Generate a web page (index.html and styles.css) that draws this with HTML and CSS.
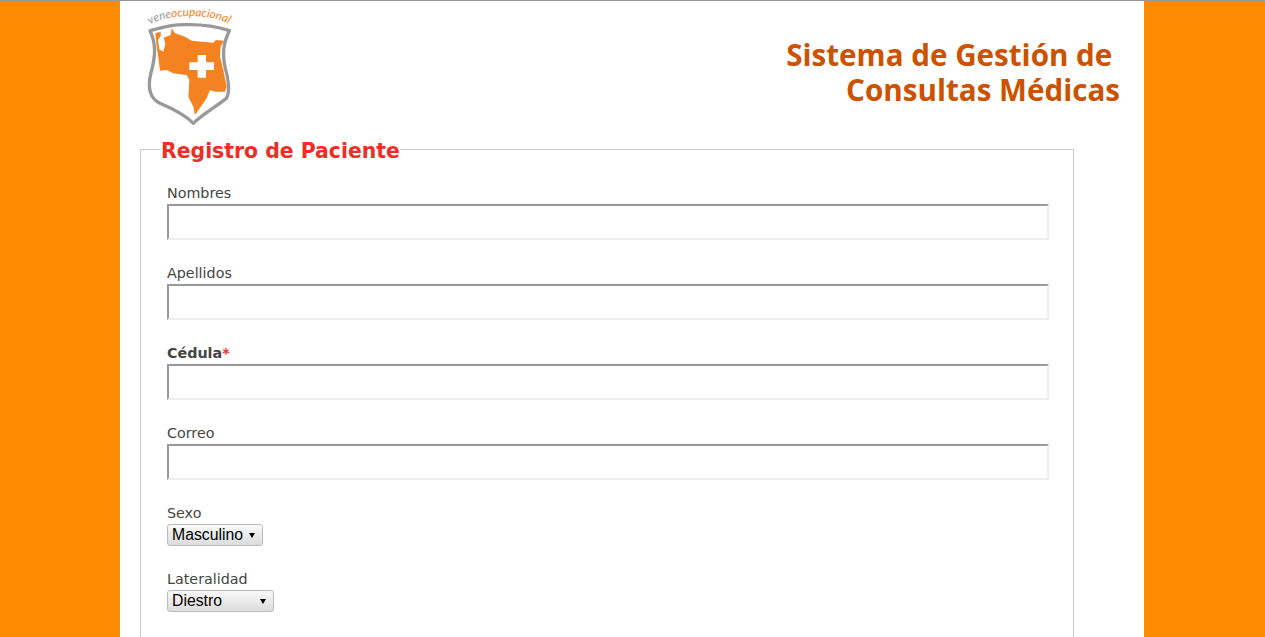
FILE: index.html
```html
<!doctype html>
<html lang="es">
 <head>
  <meta charset="utf-8">
  <title>Registro de Paciente</title>
  <link rel="stylesheet" href="styles.css">
 </head>
 <body>
 <div id="page">
   <header class="top">
     <svg class="logo" viewBox="0 3 390 390" width="130" height="130" role="img" aria-label="veneocupacional">
       <defs>
         <path id="logo-arc" d="M60 74 C105 42 250 36 312 80"/>
       </defs>
       <text class="logo-text" font-size="35"><textPath href="#logo-arc">vene<tspan class="logo-text-accent">ocupacional</tspan></textPath></text>
       <path class="logo-shield" d="M60 92 C110 78 130 73 178 74 C225 74 262 80 298 92 C280 130 276 160 286 205 C298 250 300 280 288 296 C258 320 215 345 190 370 C165 345 125 325 90 310 C60 295 52 265 62 222 C78 165 78 130 60 92 Z"/>
       <path class="logo-map" d="M76 100 L92 95 L92 108 L84 120 L88 148 L100 155 L106 132 L101 113 L122 105 L125 85 L135 100 L165 110 L185 122 L215 125 L250 128 L258 120 L282 122 L272 140 L270 170 L280 210 L290 260 L285 275 L255 275 L240 270 L230 295 L195 345 L190 320 L175 290 L178 240 L170 225 L130 220 L110 210 L90 212 L86 180 L80 140 Z"/>
       <path class="logo-cross" d="M203 165 H228 V187 H252 V210 H228 V233 H203 V210 H178 V187 H203 Z"/>
     </svg>
     <h1 class="site-title">Sistema de Gestión de&nbsp;<br>Consultas Médicas</h1>
   </header>

   <fieldset class="patient-form">
     <legend>Registro de Paciente</legend>
     <form class="fields">
       <div class="field">
         <label for="nombres">Nombres</label>
         <input type="text" id="nombres">
       </div>
       <div class="field">
         <label for="apellidos">Apellidos</label>
         <input type="text" id="apellidos">
       </div>
       <div class="field">
         <label for="cedula" class="required">Cédula<span class="mark">*</span></label>
         <input type="text" id="cedula">
       </div>
       <div class="field">
         <label for="correo">Correo</label>
         <input type="text" id="correo">
       </div>
       <div class="field">
         <label for="sexo">Sexo</label>
         <select id="sexo" class="select-sexo">
           <option>Masculino</option>
           <option>Femenino</option>
         </select>
       </div>
       <div class="field">
         <label for="lateralidad">Lateralidad</label>
         <select id="lateralidad" class="select-lateralidad">
           <option>Diestro</option>
           <option>Zurdo</option>
         </select>
       </div>
     </form>
   </fieldset>
 </div>
 </body>
</html>
```

FILE: styles.css
```css
html, body {
    margin: 0;
    height: 100%;
    overflow: hidden;
}

body {
    background-color: #ff8c00;
    border-top: 1px solid #999999;
    box-sizing: border-box;
}

#page {
    width: 1024px;
    height: 100%;
    margin-left: 120px;
    background-color: #ffffff;
    overflow: hidden;
}

.top {
    display: flex;
    justify-content: space-between;
    height: 134px;
    padding-left: 10px;
    padding-right: 24px;
}

.logo {
    display: block;
}

.logo-text {
    font-family: "Lato", sans-serif;
    font-style: italic;
    fill: #999999;
}

.logo-text-accent {
    fill: #f58220;
}

.logo-shield {
    fill: #ffffff;
    stroke: #999999;
    stroke-width: 10;
    stroke-linejoin: round;
}

.logo-map {
    fill: #f58220;
}

.logo-cross {
    fill: #ffffff;
}

.site-title {
    margin: 36px 0 0;
    font-family: "Open Sans", sans-serif;
    font-size: 29.6px;
    font-weight: 700;
    line-height: 35px;
    text-align: right;
    color: #cc5200;
}

.patient-form {
    width: 934px;
    min-height: 700px;
    box-sizing: border-box;
    margin: 0 0 0 20px;
    padding: 0 24px 0 20px;
    border: 1px solid #cccccc;
}

.patient-form legend {
    padding: 4px 0 0;
    font-family: "DejaVu Sans", sans-serif;
    font-size: 20.4px;
    font-weight: 700;
    color: #ee2e24;
}

.fields {
    padding: 20px 0 0 6px;
}

.field {
    margin-bottom: 23px;
}

.field label {
    display: block;
    height: 21px;
    font-family: "DejaVu Sans", sans-serif;
    font-size: 14.3px;
    line-height: 20px;
    color: #444444;
}

.field label.required {
    font-weight: 700;
}

.mark {
    color: #ee2e24;
}

.field input {
    display: block;
    width: 882px;
    height: 36px;
    box-sizing: border-box;
    border-style: solid;
    border-width: 2px;
    border-color: #999999 #eeeeee #eeeeee #999999;
    background-color: #ffffff;
}

.field select {
    display: block;
    height: 22px;
    box-sizing: border-box;
    padding: 0 0 2px 4px;
    appearance: none;
    border: 1px solid #bbbbbb;
    border-radius: 3px;
    background: url("data:image/svg+xml,%3Csvg xmlns='http://www.w3.org/2000/svg' width='6' height='5'%3E%3Cpath d='M0 0H6L3 5Z'/%3E%3C/svg%3E") no-repeat right 7px center, linear-gradient(#fafafa, #dcdcdc);
    font-family: "Liberation Sans", sans-serif;
    font-size: 15.8px;
    color: #000000;
}

.select-sexo {
    width: 96px;
}

.select-lateralidad {
    width: 107px;
}
```
